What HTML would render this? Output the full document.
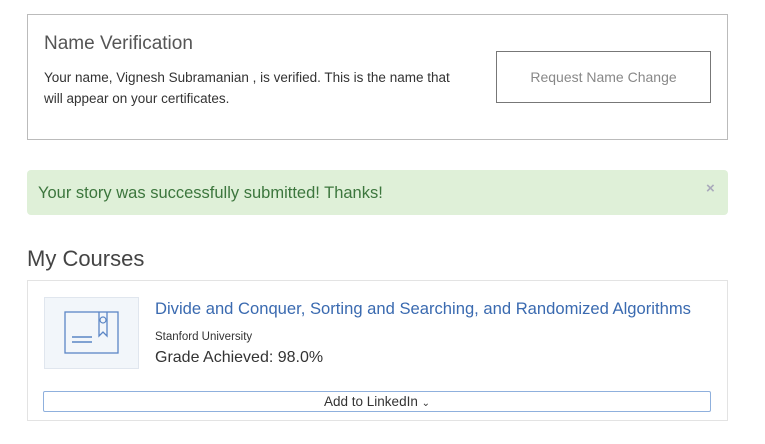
<!DOCTYPE html>
<html><head><style>
body{margin:0;width:765px;height:444px;background:#fff;font-family:"Liberation Sans",sans-serif;position:relative;overflow:hidden;color:#333}
.a{position:absolute}
</style></head><body>
<div class="a" style="left:27px;top:14px;width:699px;height:124px;border:1px solid #bbb"></div>
<div class="a" style="left:44px;top:33px;font-size:19px;color:#555">Name Verification</div>
<div class="a" style="left:44px;top:67px;font-size:13.5px;line-height:21px;color:#333;width:418px">Your name, Vignesh Subramanian , is verified. This is the name that will appear on your certificates.</div>
<div class="a" style="left:496px;top:51px;width:213px;height:50px;border:1px solid #777;font-size:14px;color:#888;text-align:center;line-height:50px">Request Name Change</div>
<div class="a" style="left:27px;top:170px;width:701px;height:45px;background:#dff0d8;border-radius:4px"></div>
<div class="a" style="left:38px;top:184px;font-size:16.5px;color:#3c763d">Your story was successfully submitted! Thanks!</div>
<div class="a" style="left:706px;top:180px;font-size:15px;color:#aab;font-weight:bold">×</div>
<div class="a" style="left:27px;top:246px;font-size:22px;color:#444">My Courses</div>
<div class="a" style="left:27px;top:280px;width:699px;height:139px;border:1px solid #e3e3e3"></div>
<div class="a" style="left:44px;top:297px;width:93px;height:70px;background:#f2f6fa;border:1px solid #e0e6ee"></div>
<svg class="a" style="left:64px;top:311px" width="56" height="44" viewBox="0 0 56 44"><rect x="1" y="1" width="53" height="41" fill="none" stroke="#5b86c5" stroke-width="1.3"/><path d="M35 1V25L39 21L43 25V1" fill="none" stroke="#5b86c5" stroke-width="1.3"/><circle cx="39" cy="9" r="3" fill="none" stroke="#5b86c5" stroke-width="1.2"/><path d="M8 26H28M8 31H28" stroke="#5b86c5" stroke-width="1.6"/></svg>
<div class="a" style="left:155px;top:299px;font-size:16.6px;color:#3a6ab0">Divide and Conquer, Sorting and Searching, and Randomized Algorithms</div>
<div class="a" style="left:155px;top:331px;font-size:11.5px;color:#333">Stanford University</div>
<div class="a" style="left:155px;top:349px;font-size:16px;color:#333">Grade Achieved: 98.0%</div>
<div class="a" style="left:43px;top:391px;width:666px;height:19px;border:1px solid #8fb0dd;border-radius:2px;font-size:13.5px;color:#333;text-align:center;line-height:20px">Add to LinkedIn <span style="font-size:10px">&#8964;</span></div>
</body></html>
